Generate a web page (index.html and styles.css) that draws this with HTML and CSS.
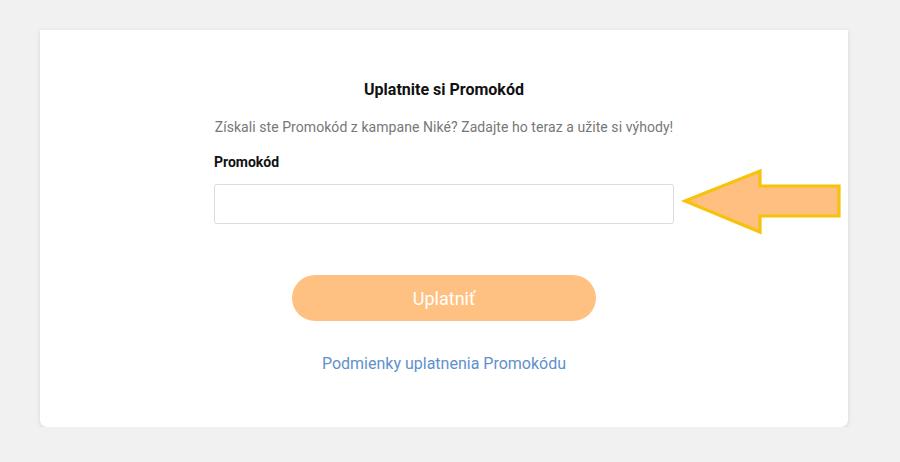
FILE: index.html
```html
<!DOCTYPE html>
<html lang="sk">
<head>
<meta charset="utf-8">
<title>Uplatnite si Promokód</title>
<link rel="stylesheet" href="styles.css">
</head>
<body>
<div class="page">
  <div class="card">
    <div class="form">
      <h1 class="title">Uplatnite si Promokód</h1>
      <p class="subtitle">Získali ste Promokód z kampane Niké? Zadajte ho teraz a užite si výhody!</p>
      <label class="label" for="code">Promokód</label>
      <input class="input" id="code" type="text">
      <button class="btn" type="button">Uplatniť</button>
      <a class="link" href="#">Podmienky uplatnenia Promokódu</a>
    </div>
    <svg class="arrow" width="164" height="70" viewBox="0 0 164 70">
      <polygon points="4,33 79,3 79,18 158,18 158,48 79,48 79,64" fill="#ffbf80" stroke="#f6c20c" stroke-width="3.2" stroke-linejoin="miter"/>
    </svg>
  </div>
</div>
</body>
</html>
```

FILE: styles.css
```css
html, body {
  margin: 0;
  padding: 0;
  background: #f1f1f1;
  font-family: Roboto, "Liberation Sans", Arial, sans-serif;
}
.page {
  padding: 30px 52px 0 40px;
}
.card {
  position: relative;
  background: #fff;
  height: 397px;
  box-sizing: border-box;
  border-radius: 0 0 7px 7px;
  box-shadow: 0 1px 4px rgba(0,0,0,0.12);
  padding-top: 50px;
}
.form {
  width: 460px;
  margin: 0 auto;
  display: flex;
  flex-direction: column;
  align-items: center;
}
.title {
  margin: 0;
  font-size: 16px;
  line-height: 20px;
  font-weight: 700;
  color: #111;
}
.subtitle {
  margin: 17px 0 0;
  font-size: 14px;
  line-height: 20px;
  letter-spacing: 0.06px;
  color: #777;
  white-space: nowrap;
}
.label {
  align-self: flex-start;
  margin-top: 15px;
  font-size: 14px;
  line-height: 20px;
  font-weight: 700;
  color: #111;
}
.input {
  align-self: stretch;
  margin-top: 12px;
  height: 40px;
  box-sizing: border-box;
  border: 1px solid #dcdcdc;
  border-radius: 3px;
  background: #fff;
  outline: none;
  font: inherit;
}
.btn {
  margin-top: 51px;
  width: 304px;
  height: 46px;
  border: none;
  border-radius: 23px;
  background: #ffc182;
  color: #fff;
  font-family: inherit;
  font-size: 18px;
  font-weight: 400;
  cursor: pointer;
}
.link {
  margin-top: 33px;
  font-size: 16px;
  line-height: 20px;
  color: #5f90cc;
  text-decoration: none;
}
.arrow {
  position: absolute;
  left: 641px;
  top: 138px;
}
```
